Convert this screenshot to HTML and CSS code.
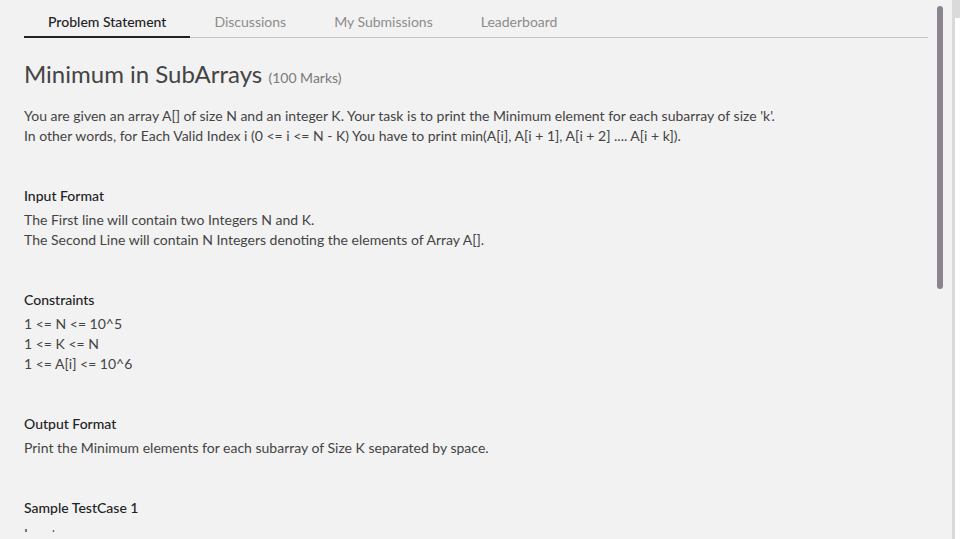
FILE: index.html
```html
<!DOCTYPE html>
<html lang="en">
<head>
<meta charset="utf-8">
<title>Minimum in SubArrays</title>
<link rel="stylesheet" href="styles.css">
</head>
<body>
<div class="page">
  <nav class="tabs">
    <a class="tab active">Problem Statement</a>
    <a class="tab">Discussions</a>
    <a class="tab">My Submissions</a>
    <a class="tab">Leaderboard</a>
  </nav>
  <h1 class="title">Minimum in SubArrays <span class="marks">(100 Marks)</span></h1>
  <div class="intro">
    <p>You are given an array A[] of size N and an integer K. Your task is to print the Minimum element for each subarray of size 'k'.</p>
    <p>In other words, for Each Valid Index i (0 &lt;= i &lt;= N - K) You have to print min(A[i], A[i + 1], A[i + 2] .... A[i + k]).</p>
  </div>
  <section class="sec">
    <h2>Input Format</h2>
    <p>The First line will contain two Integers N and K.</p>
    <p>The Second Line will contain N Integers denoting the elements of Array A[].</p>
  </section>
  <section class="sec">
    <h2>Constraints</h2>
    <p>1 &lt;= N &lt;= 10^5</p>
    <p>1 &lt;= K &lt;= N</p>
    <p>1 &lt;= A[i] &lt;= 10^6</p>
  </section>
  <section class="sec">
    <h2>Output Format</h2>
    <p>Print the Minimum elements for each subarray of Size K separated by space.</p>
  </section>
  <section class="sec last">
    <h2>Sample TestCase 1</h2>
    <p class="sub">Input</p>
  </section>
</div>
<div class="thumb"></div>
<div class="outer-bar"><div class="outer-track"></div></div>
</body>
</html>
```
FILE: styles.css
```css
html, body {
  margin: 0;
  padding: 0;
  background: #f2f2f2;
  height: 100%;
  overflow: hidden;
}
body {
  font-family: Lato, "Open Sans", Arial, sans-serif;
  color: #444;
  font-size: 14px;
  line-height: 20px;
}
.page {
  padding: 0 32px 0 24px;
  height: 532px;
  overflow: hidden;
}
.tabs {
  display: flex;
  border-bottom: 1px solid #c4c4c4;
}
.tab {
  padding: 14px 24px 6px;
  line-height: 16px;
  font-size: 14px;
  color: #8c8c8c;
  border-bottom: 2px solid transparent;
  margin-bottom: -1px;
}
.tab.active {
  color: #222;
  font-weight: 500;
  border-bottom-color: #222;
}
.title {
  margin: 21px 0 0;
  font-size: 24px;
  line-height: 30px;
  font-weight: 400;
  color: #444;
}
.marks {
  font-size: 14px;
  color: #7a7a7a;
}
.intro {
  margin-top: 13px;
}
p {
  margin: 0;
}
.sec {
  margin-top: 40px;
}
.sec h2 {
  margin: 0 0 4px;
  font-size: 14px;
  line-height: 20px;
  font-weight: 500;
  color: #222;
}
.last .sub {
  padding-top: 2px;
}
.thumb {
  position: fixed;
  left: 937px;
  top: 6px;
  width: 6px;
  height: 283px;
  border-radius: 3px;
  background: #8a848e;
}
.outer-bar {
  position: fixed;
  top: 0;
  right: 0;
  width: 8px;
  height: 100%;
  background: #dadada;
}
.outer-track {
  margin: 18px 0 0 3px;
  height: calc(100% - 18px);
  background: #fff;
}
```
